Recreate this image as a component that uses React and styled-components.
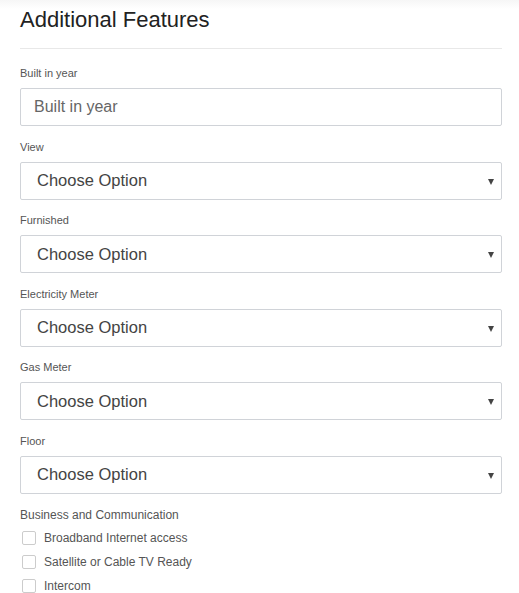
import styled, { createGlobalStyle } from "styled-components"

const GlobalStyle = createGlobalStyle`
    body {
        margin: 0;
        background: #fff;
        font-family: "Liberation Sans", Arial, sans-serif;
    }
`

const Page = styled.div`
    padding: 0 17px 0 20px;
    background: linear-gradient(#f6f6f6 0, #fff 9px);
`

const Title = styled.h3`
    margin: 0;
    padding-top: 7px;
    font-size: 22px;
    font-weight: 400;
    color: #222;
    line-height: 26px;
    padding-bottom: 15px;
    border-bottom: 1px solid #e8e8e8;
`

const Field = styled.div`
    display: flex;
    flex-direction: column;
    margin-top: ${(p) => p.first ? "17px" : "13.5px"};
`

const Label = styled.label`
    font-size: 11px;
    color: #555;
    line-height: 14px;
    margin-bottom: 8px;
`

const Input = styled.input`
    box-sizing: border-box;
    height: 38px;
    border: 1px solid #d0d3d8;
    border-radius: 2px;
    padding: 0 13px;
    font-family: inherit;
    font-size: 16px;
    color: #555;
    &::placeholder {
        color: #666;
    }
`

const SelectBox = styled.div`
    display: flex;
    align-items: center;
    box-sizing: border-box;
    height: 38px;
    border: 1px solid #d0d3d8;
    border-radius: 2px;
    padding: 0 16px;
    font-size: 16.5px;
    color: #444;
`

const Arrow = styled.span`
    margin-left: auto;
    margin-right: -9px;
    width: 0;
    height: 0;
    border-left: 3.5px solid transparent;
    border-right: 3.5px solid transparent;
    border-top: 6px solid #444;
    margin-top: 2px;
`

const Group = styled.div`
    margin-top: 14px;
    display: flex;
    flex-direction: column;
`

const GroupTitle = styled.div`
    font-size: 12px;
    color: #555;
    line-height: 14px;
    margin-bottom: 4px;
`

const Check = styled.label`
    display: flex;
    align-items: center;
    gap: 8px;
    height: 24px;
    padding-left: 2px;
    font-size: 12px;
    color: #555;
`

const Box = styled.span`
    width: 12px;
    height: 12px;
    border: 1px solid #ccc;
    border-radius: 2px;
    background: #fff;
`

const selects = ["View", "Furnished", "Electricity Meter", "Gas Meter", "Floor"]
const checks = ["Broadband Internet access", "Satellite or Cable TV Ready", "Intercom"]

const App = () => {
    return (
        <Page>
            <GlobalStyle />
            <Title>Additional Features</Title>
            <Field first>
                <Label>Built in year</Label>
                <Input placeholder="Built in year" />
            </Field>
            {selects.map((s) => (
                <Field key={s}>
                    <Label>{s}</Label>
                    <SelectBox>
                        Choose Option
                        <Arrow />
                    </SelectBox>
                </Field>
            ))}
            <Group>
                <GroupTitle>Business and Communication</GroupTitle>
                {checks.map((c) => (
                    <Check key={c}>
                        <Box />
                        {c}
                    </Check>
                ))}
            </Group>
        </Page>
    )
}

export default App
